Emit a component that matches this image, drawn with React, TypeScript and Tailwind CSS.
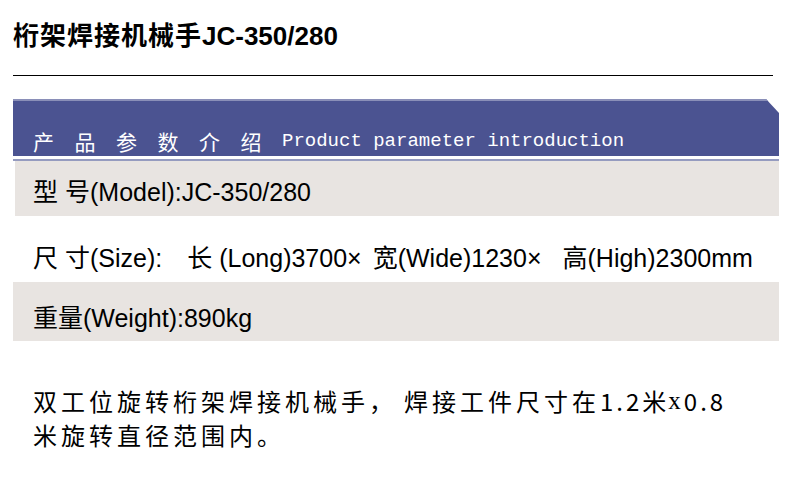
import React from 'react';

const sans = "font-['Liberation_Sans','Noto_Sans_CJK_SC',sans-serif]";

const App = () => {
  return (
    <div className="w-[800px] h-[482px] bg-white overflow-hidden text-black">
      {/* Title */}
      <h1 className={`${sans} pl-[13px] pt-[22px] text-[26px] leading-[28px] font-bold whitespace-nowrap`}>
        <span className="tracking-[1px]">桁架焊接机械手</span>JC-350/280
      </h1>
      <div className="ml-[13px] mt-[25px] w-[760px] h-px bg-black" />

      {/* Parameter table */}
      <div className="ml-[13px] mt-[23px] w-[766px]">
        <div className="h-[57px] bg-[#4b5391] border-t-2 border-[#8a8fb8] flex items-end pb-[5px] pl-[20px] [clip-path:polygon(0_0,calc(100%-13px)_0,100%_14px,100%_100%,0_100%)]">
          <span className="font-['Noto_Sans_CJK_SC',sans-serif] text-[21px] leading-[20px] text-white tracking-[20.5px] whitespace-nowrap">
            产品参数介绍
          </span>
          <span className="font-['Liberation_Mono',monospace] text-[19px] leading-[20px] text-white whitespace-nowrap">
            Product parameter introduction
          </span>
        </div>
        <div className="mt-[3px] h-[2px] bg-[#959bbf]" />
        <div className={`${sans} text-[25px] leading-[30px]`}>
          <div className="ml-[2px] h-[55px] bg-[#e8e4e1] flex items-center pt-[7px] pl-[18px] whitespace-nowrap">
            <span>型</span>
            <span className="ml-[7px]">号(Model):JC-350/280</span>
          </div>
          <div className="h-[66px] flex items-center pt-[17px] pl-[20px] whitespace-nowrap">
            <span>尺</span>
            <span className="ml-[7px]">寸(Size):</span>
            <span className="ml-[25px]">长 (Long)3700×</span>
            <span className="ml-[11px]">宽(Wide)1230×</span>
            <span className="ml-[21px]">高(High)2300mm</span>
          </div>
          <div className="h-[59px] bg-[#e8e4e1] flex items-center pt-[13px] pl-[20px] whitespace-nowrap">
            重量(Weight):890kg
          </div>
        </div>
      </div>

      {/* Description */}
      <div className="mt-[43px] pl-[33px] font-['Noto_Sans_CJK_SC',sans-serif] text-[24px] whitespace-nowrap">
        <p className="h-[34px] leading-[34px] flex items-center">
          <span className="tracking-[4px]">双工位旋转桁架焊接机械手，</span>
          <span className="ml-[7px] tracking-[4px]">焊接工件尺寸在</span>
          <span className="tracking-[3px]">1.2</span>
          <span className="tracking-[2px]">米</span>
          <span className="font-['Liberation_Serif',serif] text-[25px] tracking-[3px]">x</span>
          <span className="tracking-[3px]">0.8</span>
        </p>
        <p className="h-[34px] leading-[34px] tracking-[4px]">米旋转直径范围内。</p>
      </div>
    </div>
  );
};

export default App;
